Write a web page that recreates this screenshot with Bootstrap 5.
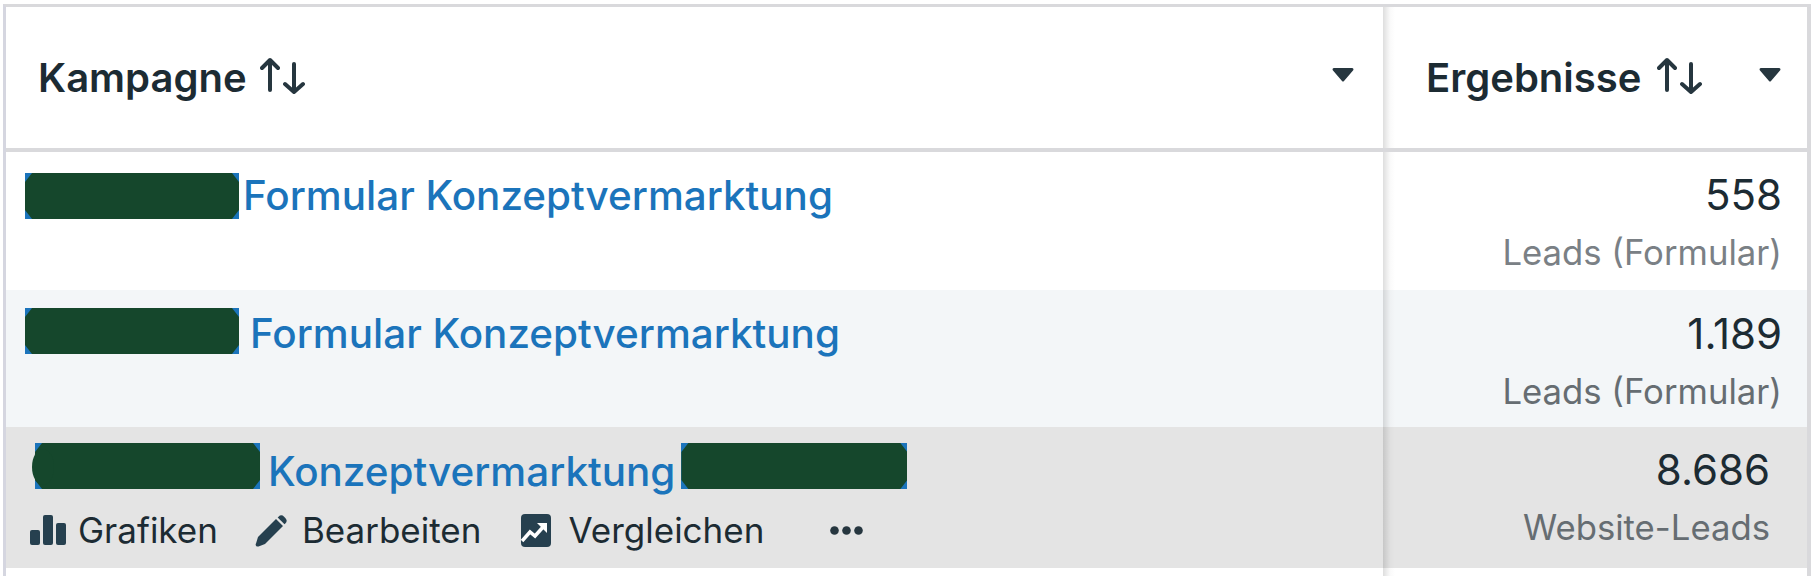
<!doctype html>
<html lang="de">
<head>
<meta charset="utf-8">
<title>Kampagnen</title>
<link href="https://cdn.jsdelivr.net/npm/bootstrap@5.3.0/dist/css/bootstrap.min.css" rel="stylesheet">
<style>
html,body{height:100%;background:#fff;overflow:hidden}
body{font-family:Inter,"Noto Sans","Liberation Sans",sans-serif;color:#1c2b33;padding:4px 1px 0 3px}
.ads-frame{border-top:3px solid #d9d9dc;border-left:3px solid #d5d6e0;border-right:4px solid #d9d9dc;height:600px}
.table.ads-table{table-layout:fixed;width:100%;border-collapse:separate;border-spacing:0;margin:0;--bs-table-bg:transparent;color:inherit}
.table.ads-table>*>*>*{border:0;padding:0;box-shadow:none;background-color:transparent}
.col-camp{width:1377px}
.table.ads-table .head-row>*{height:145px;border-bottom:4px solid #d9d9dc;vertical-align:middle}
.table.ads-table .head-row .metric-cell{padding-right:26px}
.head-title{font-size:40px;font-weight:600;line-height:40px}
.head-inner{padding-left:32px;padding-right:29px}
.metric-cell .head-inner{padding-left:43px;padding-right:0}
.sort-ico{width:46px;height:38px;margin-left:13px;display:block;margin-top:-4px}
.metric-cell .sort-ico{margin-left:16px}
.caret-ico{width:22px;height:15px;display:block;margin-top:-7px}
.table.ads-table .r1>*{height:138px}
.table.ads-table .r2>*{height:137px;background-color:#f3f6f8}
.table.ads-table .r3>*{height:141px;background-color:#e4e4e4}
.table.ads-table .r4>*{height:20px}
.table.ads-table .metric-cell{background-image:linear-gradient(90deg,rgba(0,0,0,.13),rgba(0,0,0,.02) 60%,transparent);background-size:12px 100%;background-repeat:no-repeat}
.camp-line{display:flex;align-items:flex-start}
.redact{flex:none;width:214px;height:46px;background:#1b74bb;position:relative}
.redact::before{content:"";position:absolute;inset:0;background:#15472c;clip-path:polygon(7px 0,calc(100% - 7px) 0,100% 9px,100% calc(100% - 9px),calc(100% - 7px) 100%,7px 100%,0 calc(100% - 9px),0 9px)}
.redact-wide{width:225px}
.redact-bulge::after{content:"";position:absolute;left:-3px;top:6px;bottom:4px;width:22px;border-radius:50%;background:#15472c}
.camp-link{font-size:40.400px;font-weight:500;color:#1b74bb;text-decoration:none;line-height:46px;white-space:nowrap}
.r1 .camp-line{padding:21px 0 0 19px}
.r1 .camp-link{margin-left:4px}
.r2 .camp-line{padding:18px 0 0 19px}
.r2 .camp-link{margin-left:11px;margin-top:3px}
.r3 .camp-line{padding:16px 0 0 29px}
.r3 .camp-link{margin-left:8px;margin-top:6px}
.r3 .redact-end{margin-left:6px;width:226px}
.act-row{display:flex;align-items:center;padding:15px 0 0 24px;font-size:35px;line-height:40px;color:#1c2b33}
.act-item{display:flex;align-items:center;white-space:nowrap}
.act-ico{display:block;flex:none}
.act-chart svg{margin-right:12px}
.act-edit{margin-left:37px}.act-edit svg{margin-right:14px}
.act-comp{margin-left:40px}.act-comp svg{margin-right:17px}
.act-more{margin-left:66px}
.table.ads-table .metric-cell.val{vertical-align:top;text-align:end;padding-right:25px}
.table.ads-table .r1 .val{padding-top:20px}
.table.ads-table .r2 .val{padding-top:21px}
.table.ads-table .r3 .val{padding-top:20px;padding-right:37px}
.num{font-size:42px;line-height:46px;font-weight:400}
.unit{font-size:34.700px;line-height:40px;color:#7a8085;margin-top:14px}
.r2 .unit,.r3 .unit{color:#666d72}
</style>
</head>
<body>
<div class="ads-frame">
<table class="table ads-table">
<colgroup><col class="col-camp"><col></colgroup>
<thead>
<tr class="head-row">
<th>
<div class="head-inner d-flex align-items-center justify-content-between">
<div class="d-flex align-items-center"><span class="head-title">Kampagne</span>
<svg class="sort-ico" viewBox="0 0 46 38" fill="none" stroke="#26363f" stroke-width="4" stroke-linecap="round" stroke-linejoin="round"><path d="M10 33V3M2 11l8-8 8 8M34 7v28M25 27l9 8 9-8"/></svg></div>
<svg class="caret-ico" viewBox="0 0 22 15"><path d="M2 1h18a1.4 1.4 0 0 1 1 2.4L12 14a1.4 1.4 0 0 1-2 0L1 3.400A1.400 1.400 0 0 1 2 1z" fill="#26363f"/></svg>
</div>
</th>
<th class="metric-cell">
<div class="head-inner d-flex align-items-center justify-content-between">
<div class="d-flex align-items-center"><span class="head-title">Ergebnisse</span>
<svg class="sort-ico" viewBox="0 0 46 38" fill="none" stroke="#26363f" stroke-width="4" stroke-linecap="round" stroke-linejoin="round"><path d="M10 33V3M2 11l8-8 8 8M34 7v28M25 27l9 8 9-8"/></svg></div>
<svg class="caret-ico" viewBox="0 0 22 15"><path d="M2 1h18a1.4 1.4 0 0 1 1 2.4L12 14a1.4 1.4 0 0 1-2 0L1 3.400A1.400 1.400 0 0 1 2 1z" fill="#26363f"/></svg>
</div>
</th>
</tr>
</thead>
<tbody>
<tr class="r1">
<td class="align-top"><div class="camp-line"><span class="redact"></span><a class="camp-link" href="#">Formular Konzeptvermarktung</a></div></td>
<td class="metric-cell val"><div class="num">558</div><div class="unit">Leads (Formular)</div></td>
</tr>
<tr class="r2">
<td class="align-top"><div class="camp-line"><span class="redact"></span><a class="camp-link" href="#">Formular Konzeptvermarktung</a></div></td>
<td class="metric-cell val"><div class="num">1.189</div><div class="unit">Leads (Formular)</div></td>
</tr>
<tr class="r3">
<td class="align-top">
<div class="camp-line"><span class="redact redact-wide redact-bulge"></span><a class="camp-link" href="#">Konzeptvermarktung</a><span class="redact redact-end"></span></div>
<div class="act-row">
<span class="act-item act-chart"><svg class="act-ico" width="36" height="30" viewBox="0 0 36 30" fill="#26404f"><rect x="0" y="15" width="10" height="15" rx="2"/><rect x="13" y="0" width="10" height="30" rx="2"/><rect x="26" y="8" width="10" height="22" rx="2"/></svg>Grafiken</span>
<span class="act-item act-edit"><svg class="act-ico" width="33" height="33" viewBox="0 0 33 33" fill="#26404f"><path d="M1 29.500 3 23 21 5l7 7L10 30l-6.500 2.400A2 2 0 0 1 1 29.500z"/><path d="M23.500 2.700a4 4 0 0 1 5.600 0l1.200 1.200a4 4 0 0 1 0 5.600L29.500 10.300l-6.800-6.800z"/></svg>Bearbeiten</span>
<span class="act-item act-comp"><svg class="act-ico" width="30" height="33" viewBox="0 0 30 33"><rect width="30" height="33" rx="4" fill="#26404f"/><path d="M1 27l8-9 5 4 9-10" fill="none" stroke="#fff" stroke-width="3.500"/><path d="M16 9h10v10z" fill="#fff"/></svg>Vergleichen</span>
<span class="act-item act-more"><svg class="act-ico" width="33" height="9" viewBox="0 0 33 9" fill="#26363f"><circle cx="4.500" cy="4.500" r="4.300"/><circle cx="16.500" cy="4.500" r="4.300"/><circle cx="28.500" cy="4.500" r="4.300"/></svg></span>
</div>
</td>
<td class="metric-cell val"><div class="num">8.686</div><div class="unit">Website-Leads</div></td>
</tr>
<tr class="r4"><td></td><td class="metric-cell"></td></tr>
</tbody>
</table>
</div>
</body>
</html>
